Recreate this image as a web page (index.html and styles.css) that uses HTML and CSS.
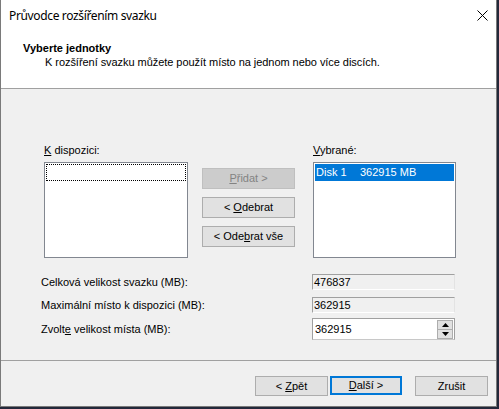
FILE: index.html
```html
<!DOCTYPE html>
<html lang="cs">
<head>
<meta charset="utf-8">
<title>Průvodce rozšířením svazku</title>
<link rel="stylesheet" href="styles.css">
</head>
<body>
<div class="window">
  <div class="titlebar">
    <span class="title">Průvodce rozšířením svazku</span>
    <svg class="close" width="11" height="11" viewBox="0 0 11 11"><path d="M0.5 0.5 L10.5 10.5 M10.5 0.5 L0.5 10.5" stroke="#000" stroke-width="1" fill="none"/></svg>
  </div>
  <div class="header">
    <div class="h-title">Vyberte jednotky</div>
    <div class="h-sub">K rozšíření svazku můžete použít místo na jednom nebo více discích.</div>
  </div>
  <div class="content">
    <div class="lists">
      <div class="col">
        <div class="lbl"><u>K</u> dispozici:</div>
        <div class="listbox"><div class="focus-row"></div></div>
      </div>
      <div class="btns">
        <div class="btn disabled"><span><u>P</u>řidat &gt;</span></div>
        <div class="btn"><span>&lt; <u>O</u>debrat</span></div>
        <div class="btn"><span>&lt; Ode<u>b</u>rat vše</span></div>
      </div>
      <div class="col">
        <div class="lbl"><u>V</u>ybrané:</div>
        <div class="listbox"><div class="sel-row"><span class="disk">Disk 1</span><span>362915 MB</span></div></div>
      </div>
    </div>
    <div class="sizes">
      <div class="slbl">Celková velikost svazku (MB):</div>
      <div class="field ro">476837</div>
      <div class="slbl">Maximální místo k dispozici (MB):</div>
      <div class="field ro">362915</div>
      <div class="slbl">Zvolt<u>e</u> velikost místa (MB):</div>
      <div class="field spin">
        <span class="val">362915</span>
        <div class="spinbtns">
          <div class="sb"><svg width="7" height="4" viewBox="0 0 7 4"><path d="M0 4 L3.5 0 L7 4 Z" fill="#000"/></svg></div>
          <div class="sb"><svg width="7" height="4" viewBox="0 0 7 4"><path d="M0 0 L3.5 4 L7 0 Z" fill="#000"/></svg></div>
        </div>
      </div>
    </div>
  </div>
  <div class="footer">
    <div class="btn fbtn"><span>&lt; <u>Z</u>pět</span></div>
    <div class="btn fbtn default"><span><u>D</u>alší &gt;</span></div>
    <div class="btn fbtn cancel"><span>Zrušit</span></div>
  </div>
</div>
</body>
</html>
```
FILE: styles.css
```css
html, body {
  margin: 0;
  padding: 0;
}
body {
  background: #23283a;
  width: 499px;
  height: 409px;
  overflow: hidden;
  font-family: "Liberation Sans", Arial, sans-serif;
  font-size: 11px;
  color: #000;
}
.window {
  width: 495px;
  height: 406px;
  border-left: 1px solid #7a7a7a;
  border-right: 1px solid #7a7a7a;
  border-bottom: 1px solid #7a7a7a;
  background: #f0f0f0;
  display: flex;
  flex-direction: column;
}
.titlebar {
  height: 30px;
  background: #fff;
  display: flex;
  align-items: center;
  justify-content: space-between;
  padding: 0 8px 0 8px;
}
.title {
  font-family: "Noto Sans", "Open Sans", sans-serif;
  font-size: 12px;
  letter-spacing: -0.35px;
  padding-top: 1px;
}
.close {
  display: block;
}
.header {
  background: #fff;
  border-bottom: 1px solid #a0a0a0;
  padding: 12px 0 0 22px;
  box-sizing: border-box;
  height: 59px;
}
.h-title {
  font-weight: bold;
  line-height: 13px;
}
.h-sub {
  line-height: 13px;
  margin-top: 1px;
  padding-left: 22px;
  letter-spacing: -0.05px;
}
.content {
  flex: 1;
  padding: 55px 0 0 0;
  box-sizing: border-box;
}
.lists {
  display: flex;
  padding-left: 43px;
}
.col {
  display: flex;
  flex-direction: column;
}
.lbl {
  line-height: 13px;
  height: 18px;
}
.listbox {
  border: 1px solid #828790;
  background: #fff;
  padding: 1px;
  box-sizing: content-box;
  width: 140px;
  height: 92px;
}
.col:last-child .listbox {
  width: 139px;
}
.focus-row {
  height: 15px;
  border: 1px dotted #000;
}
.sel-row {
  height: 17px;
  background: #0078d7;
  color: #fff;
  line-height: 17px;
  padding-left: 1px;
  white-space: nowrap;
}
.disk {
  display: inline-block;
  width: 44px;
}
.btns {
  display: flex;
  flex-direction: column;
  gap: 8px;
  margin: 24px 18px 0 14px;
}
.btn {
  width: 91px;
  height: 19px;
  background: #e1e1e1;
  border: 1px solid #adadad;
  display: flex;
  align-items: center;
  justify-content: center;
  line-height: 13px;
  white-space: pre;
}
.btn.disabled {
  background: #cccccc;
  border-color: #bfbfbf;
  color: #838383;
}
.sizes {
  display: grid;
  grid-template-columns: 271px 143px;
  grid-template-rows: 16px 23px 27px;
  align-items: center;
  padding: 16px 0 0 40px;
}
.sizes > :nth-child(3), .sizes > :nth-child(4) {
  margin-top: 7px;
}
.sizes > :nth-child(5), .sizes > :nth-child(6) {
  margin-top: 5px;
}
.slbl {
  line-height: 13px;
}
.field {
  box-sizing: border-box;
  height: 16px;
  line-height: 14px;
  padding-left: 1px;
}
.field.ro {
  background: #f0f0f0;
  border-top: 1px solid #a0a0a0;
  border-left: 1px solid #a0a0a0;
  border-right: 1px solid #e3e3e3;
  border-bottom: 1px solid #fff;
}
.field.spin {
  height: 22px;
  background: #fff;
  border: 1px solid #a0a0a0;
  border-bottom-color: #c8c8c8;
  display: flex;
  align-items: center;
  justify-content: space-between;
  padding: 0 1px 0 2px;
}
.spinbtns {
  display: flex;
  flex-direction: column;
}
.sb {
  width: 14px;
  height: 8px;
  background: #e1e1e1;
  border: 1px solid #adadad;
  box-sizing: content-box;
  display: flex;
  align-items: center;
  justify-content: center;
}
.sb + .sb {
  border-top: none;
}
.footer {
  height: 46px;
  border-top: 1px solid #a0a0a0;
  box-sizing: border-box;
  display: flex;
  justify-content: flex-end;
  align-items: flex-start;
  padding: 15px 8px 0 0;
}
.fbtn {
  width: 71px;
  height: 18px;
}
.fbtn.default {
  margin-left: 2px;
  width: 68px;
  height: 15px;
  border: 2px solid #0078d7;
}
.fbtn.cancel {
  margin-left: 13px;
}
```
